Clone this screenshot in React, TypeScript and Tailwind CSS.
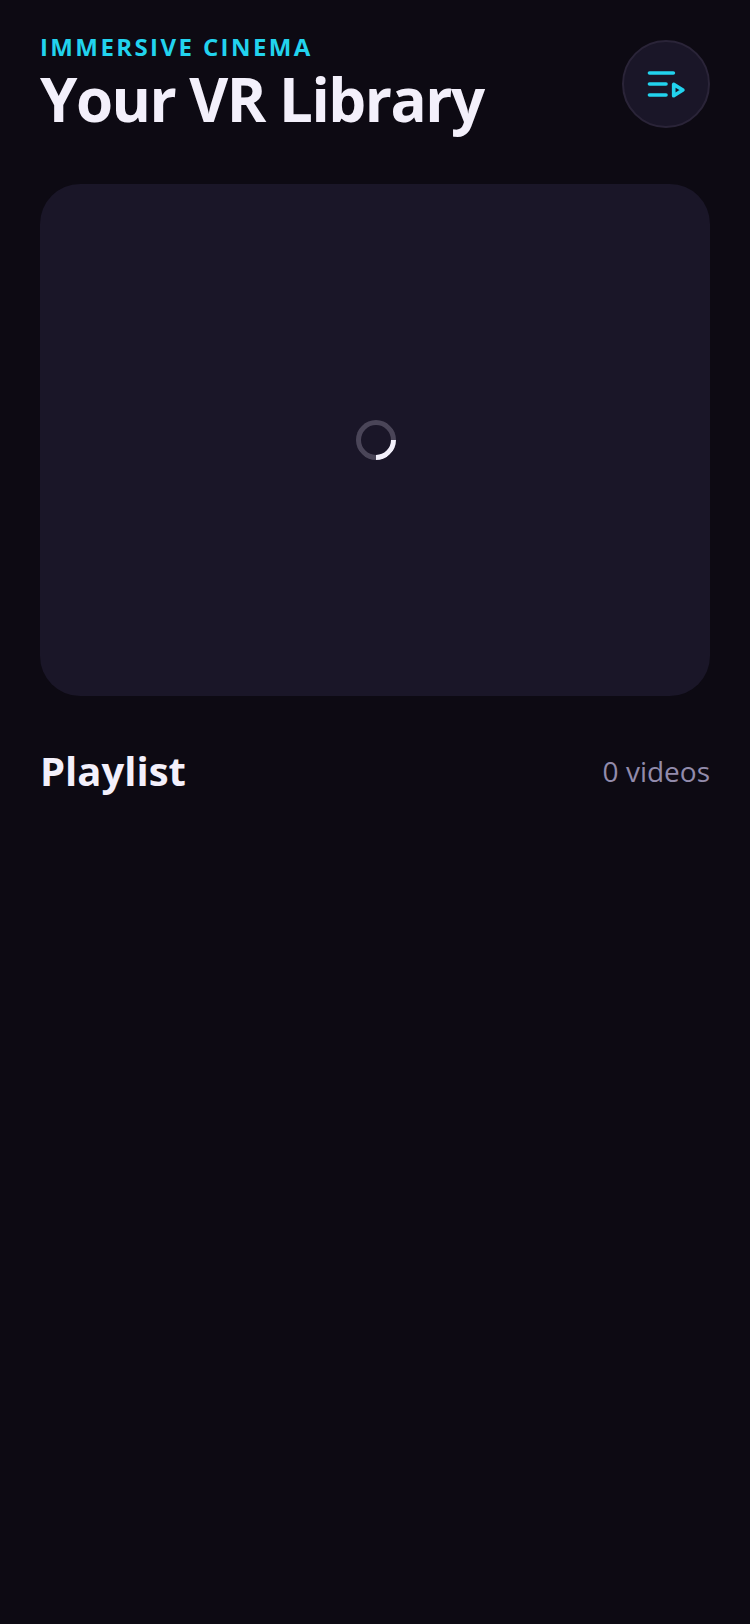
export default function App() {
  return (
    <div className="min-h-[1624px] bg-[#0d0a13] px-10 pt-[29px] font-['Open_Sans',sans-serif]">
      {/* Header */}
      <header className="flex items-start justify-between">
        <div>
          <p className="text-[24px] leading-[36px] font-bold tracking-[2.4px] text-[#22d3ee]">IMMERSIVE CINEMA</p>
          <h1 className="mt-px text-[60px] leading-[66px] font-bold tracking-[-1.5px] text-[#f3f0fb]">Your VR Library</h1>
        </div>
        <button className="mt-[11px] flex h-[88px] w-[88px] items-center justify-center rounded-full border-2 border-[#2a2438] bg-[#1a1628]">
          <svg width="44" height="44" viewBox="0 0 24 24" fill="none" stroke="#22d3ee" strokeWidth="2" strokeLinecap="round" strokeLinejoin="round">
            <path d="M3 6h13" />
            <path d="M3 12h9" />
            <path d="M3 18h9" />
            <path d="M16.2 12.2v6.2l5-3.1z" />
          </svg>
        </button>
      </header>

      {/* Player */}
      <div className="mt-[52px] flex h-[512px] items-center justify-center rounded-[40px] bg-[#1a1628]">
        <div className="ml-[2px] h-10 w-10 rotate-45 rounded-full border-[5px] border-[#4a4558] border-r-[#f3f0fb]" />
      </div>

      {/* Playlist */}
      <div className="mt-[45px] flex items-center justify-between">
        <h2 className="text-[40px] leading-[60px] font-bold text-[#f3f0fb]">Playlist</h2>
        <span className="text-[28px] leading-[42px] text-[#928bab]">0 videos</span>
      </div>
    </div>
  );
}
